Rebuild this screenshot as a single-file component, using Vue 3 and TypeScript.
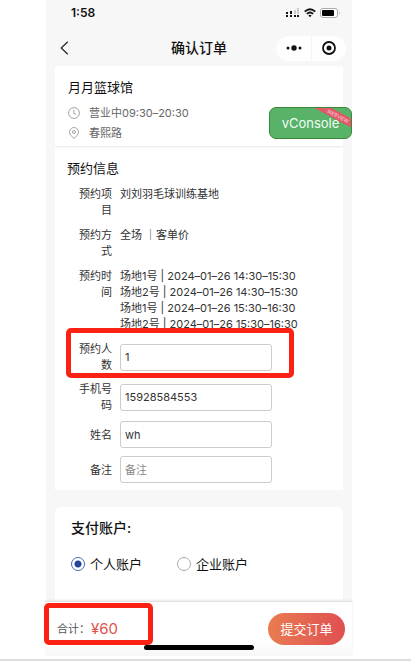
<script setup lang="ts">
import { reactive, ref } from 'vue'

interface Slot {
  court: string
  date: string
  time: string
}

const slots: Slot[] = [
  { court: '场地1号', date: '2024–01–26', time: '14:30–15:30' },
  { court: '场地2号', date: '2024–01–26', time: '14:30–15:30' },
  { court: '场地1号', date: '2024–01–26', time: '15:30–16:30' },
  { court: '场地2号', date: '2024–01–26', time: '15:30–16:30' },
]

const form = reactive({ people: '1', phone: '15928584553', name: 'wh', remark: '' })
const account = ref<'personal' | 'company'>('personal')
const total = ref(60)
</script>

<template>
  <div class="page">
    <div class="phone">
      <header>
        <div class="status">
          <span class="clock">1:58</span>
          <span class="signals">
            <svg width="14" height="10" viewBox="0 0 14 10">
              <g fill="#111">
                <rect x="0" y="7" width="2" height="2" /><rect x="4" y="7" width="2" height="2" />
                <rect x="8" y="7" width="2" height="2" /><rect x="11" y="7" width="2" height="2" />
                <rect x="0" y="4" width="2" height="2" /><rect x="4" y="3" width="2" height="3" />
              </g>
              <g fill="#ccc"><rect x="8" y="2" width="2" height="4" /><rect x="11" y="0" width="2" height="6" /></g>
            </svg>
            <svg width="12" height="10" viewBox="0 0 12 10" fill="none" stroke="#111" stroke-width="1.8">
              <path d="M.7 3.6Q6-1.2 11.3 3.6M2.8 5.9Q6 3 9.2 5.9" />
              <path d="M4.4 7.4Q6 6.1 7.6 7.4L6 9.2z" fill="#111" stroke="none" />
            </svg>
            <svg width="21" height="10" viewBox="0 0 21 10">
              <rect x=".5" y=".5" width="17" height="9" rx="2.5" fill="#fff" stroke="#aaa" />
              <rect x="2" y="2" width="12" height="6" rx="1" fill="#000" />
              <path d="M19 3.3q1.6 1.7 0 3.4z" fill="#aaa" />
            </svg>
          </span>
        </div>
        <nav class="nav">
          <button class="back" type="button" aria-label="返回">
            <svg width="9" height="14" viewBox="0 0 9 14" fill="none" stroke="#222" stroke-width="1.2">
              <path d="M7.8.8 1.2 7l6.6 6.2" />
            </svg>
          </button>
          <h1>确认订单</h1>
          <div class="capsule">
            <button type="button" aria-label="更多">
              <svg width="16" height="6" viewBox="0 0 16 6" fill="#111">
                <circle cx="2" cy="3" r="1.5" /><circle cx="8" cy="3" r="2.7" /><circle cx="14" cy="3" r="1.5" />
              </svg>
            </button>
            <button type="button" aria-label="关闭">
              <svg width="14" height="14" viewBox="0 0 14 14">
                <circle cx="7" cy="7" r="6" fill="none" stroke="#111" stroke-width="1.8" />
                <circle cx="7" cy="7" r="2.5" fill="#111" />
              </svg>
            </button>
          </div>
        </nav>
      </header>

      <main>
        <section class="card venue">
          <h2>月月篮球馆</h2>
          <p>
            <svg width="12" height="12" viewBox="0 0 12 12" fill="none" stroke="#999" stroke-width=".9">
              <circle cx="6" cy="6" r="5.4" /><path d="M5.8 2.8v3.6l2.2 1" />
            </svg>
            营业中09:30–20:30
          </p>
          <p>
            <svg width="12" height="12" viewBox="0 0 12 12" fill="none" stroke="#999" stroke-width=".9">
              <path d="M6 11.4C3.4 9.2 1.5 7.2 1.5 5a4.5 4.5 0 0 1 9 0c0 2.2-1.9 4.2-4.5 6.4z" />
              <circle cx="6" cy="5" r="1.5" />
            </svg>
            春熙路
          </p>
          <button class="vconsole" type="button">
            vConsole
            <span class="ribbon">WEBVIEW</span>
          </button>
        </section>

        <section class="card booking">
          <h2>预约信息</h2>
          <dl class="rows">
            <div class="row">
              <dt class="label">预约项目</dt>
              <dd>刘刘羽毛球训练基地</dd>
            </div>
            <div class="row">
              <dt class="label">预约方式</dt>
              <dd>全场 ｜客单价</dd>
            </div>
            <div class="row">
              <dt class="label">预约时间</dt>
              <dd>
                <div v-for="(s, i) in slots" :key="i">{{ s.court }} | {{ s.date }} {{ s.time }}</div>
              </dd>
            </div>
          </dl>
          <form class="fields" @submit.prevent>
            <div class="row field marked">
              <label class="label" for="people">预约人数</label>
              <input id="people" v-model="form.people" type="text" />
              <span class="mark"></span>
            </div>
            <div class="row field">
              <label class="label" for="phone">手机号码</label>
              <input id="phone" v-model="form.phone" type="tel" />
            </div>
            <div class="row field">
              <label class="label" for="name">姓名</label>
              <input id="name" v-model="form.name" type="text" />
            </div>
            <div class="row field">
              <label class="label" for="remark">备注</label>
              <input id="remark" v-model="form.remark" type="text" placeholder="备注" />
            </div>
          </form>
        </section>

        <section class="card account">
          <h2>支付账户:</h2>
          <div class="options">
            <label><input v-model="account" type="radio" name="account" value="personal" />个人账户</label>
            <label><input v-model="account" type="radio" name="account" value="company" />企业账户</label>
          </div>
        </section>
      </main>

      <footer>
        <div class="pay">
          <div class="total">合计：<strong>¥{{ total }}</strong><span class="mark"></span></div>
          <button class="submit" type="button">提交订单</button>
        </div>
        <div class="home"></div>
      </footer>
    </div>
    <hr />
  </div>
</template>

<style>
body {
  margin: 0;
  background: #fff;
}
</style>

<style scoped>
.page {
  display: flex;
  flex-direction: column;
  min-height: 100vh;
  font-family: Inter, 'Noto Sans CJK SC', sans-serif;
  font-size: 11px;
  line-height: 16px;
  color: #333;
}
.page * {
  box-sizing: border-box;
}
h1,
h2,
p,
dl,
dd {
  margin: 0;
}
button {
  display: flex;
  align-items: center;
  justify-content: center;
  padding: 0;
  border: 0;
  background: none;
  font: inherit;
}
svg {
  display: block;
  flex: none;
}
.phone {
  flex: 1;
  display: flex;
  flex-direction: column;
  margin: 0 59px 3px 46px;
  background: #f7f7f7;
}
.status {
  display: flex;
  align-items: center;
  justify-content: space-between;
  height: 26px;
  padding: 0 11px 0 25px;
}
.clock {
  font-size: 12px;
  font-weight: 600;
  color: #111;
}
.signals {
  display: flex;
  align-items: center;
  gap: 4px;
}
.nav {
  display: grid;
  grid-template-columns: 1fr auto 1fr;
  align-items: center;
  height: 40px;
  padding: 4px 6px 0;
}
.back {
  width: 24px;
  height: 24px;
}
h1 {
  font-size: 14px;
  font-weight: 500;
  line-height: 20px;
  color: #111;
}
.capsule {
  display: grid;
  grid-template-columns: 1fr 1fr;
  justify-self: end;
  width: 70px;
  height: 25px;
  border-radius: 13px;
  background: #fefefe;
}
.capsule button + button {
  border-left: 1px solid #f4f4f4;
}
main {
  flex: 1;
  display: flex;
  flex-direction: column;
  padding: 0 9px;
}
.card {
  background: #fff;
}
h2 {
  font-size: 13px;
  font-weight: 400;
  line-height: 20px;
  color: #111;
}
.venue {
  position: relative;
  padding: 11px 13px 3px;
  border-radius: 3px;
  border-bottom: 1px solid #eee;
}
.venue h2 {
  margin-bottom: 6px;
}
.venue p {
  display: flex;
  align-items: center;
  gap: 9px;
  height: 20px;
  color: #666;
}
.vconsole {
  position: absolute;
  top: 41px;
  right: -9px;
  width: 83px;
  height: 32px;
  border: 1px solid #3b8a35;
  border-radius: 7px;
  background: #58b368;
  color: #f2fbf3;
  font-size: 13px;
  overflow: hidden;
}
.ribbon {
  position: absolute;
  top: 4px;
  right: -14px;
  width: 54px;
  background: #e0586a;
  color: #fbd5da;
  font-size: 5px;
  line-height: 8px;
  text-align: center;
  transform: rotate(28deg);
}
.booking {
  margin-top: 1px;
  padding: 10px 12px 7px;
}
.rows,
.fields {
  display: flex;
  flex-direction: column;
}
.rows {
  gap: 9px;
  margin: 8px 0 9px;
}
.fields {
  gap: 8px;
}
.row {
  display: grid;
  grid-template-columns: 34px 1fr;
  column-gap: 8px;
  padding-left: 11px;
}
.label {
  text-align: right;
}
.field {
  position: relative;
  grid-template-columns: 34px 152px;
  align-items: center;
}
.field input {
  width: 100%;
  height: 27px;
  padding: 0 4px;
  border: 1px solid #ccc;
  border-radius: 3px;
  background: #fff;
  font: inherit;
  color: #333;
}
.field input::placeholder {
  color: #888;
  opacity: 1;
}
.mark {
  position: absolute;
  border: 5px solid #fb2113;
  border-radius: 5px;
  pointer-events: none;
}
.marked .mark {
  top: -13px;
  left: -1px;
  width: 228px;
  height: 50px;
}
.account {
  flex: 1;
  margin-top: 17px;
  padding: 11px 16px 20px;
  border-radius: 6px 6px 0 0;
}
.account h2 {
  font-size: 14px;
  font-weight: 500;
}
.options {
  display: flex;
  gap: 35px;
  margin-top: 16px;
}
.options label {
  display: flex;
  align-items: center;
  gap: 5px;
  font-size: 13px;
  line-height: 20px;
  color: #111;
}
.options input {
  appearance: none;
  width: 14px;
  height: 14px;
  margin: 0;
  border: 1px solid #aaa;
  border-radius: 50%;
  background: #fff;
}
.options input:checked {
  border-color: #4a69b4;
  background: radial-gradient(circle, #23469a 3px, #fff 4px);
}
footer {
  padding: 11px 0 6px;
  border-top: 1px solid #e2e2e2;
  background: linear-gradient(#fff 70%, #f7f7f7);
  box-shadow: 0 -1px 2px #e8e8e8;
}
.pay {
  display: flex;
  align-items: center;
  justify-content: space-between;
  padding: 0 7px 0 11px;
}
.total {
  position: relative;
  display: flex;
  align-items: center;
  gap: 1px;
  color: #555;
}
.total strong {
  font-size: 15px;
  font-weight: 400;
  color: #e0524e;
}
.total .mark {
  top: -18px;
  left: -13px;
  width: 109px;
  height: 42px;
}
.submit {
  width: 77px;
  height: 32px;
  border-radius: 16px;
  background: linear-gradient(90deg, #e97c50, #e04f52);
  color: #fff;
  font-size: 13px;
}
.home {
  width: 110px;
  height: 5px;
  margin: 0 auto;
  border-radius: 3px;
  background: #000;
}
hr {
  width: 100%;
  height: 2px;
  margin: 0;
  border: 0;
  background: #ddd;
}
</style>
